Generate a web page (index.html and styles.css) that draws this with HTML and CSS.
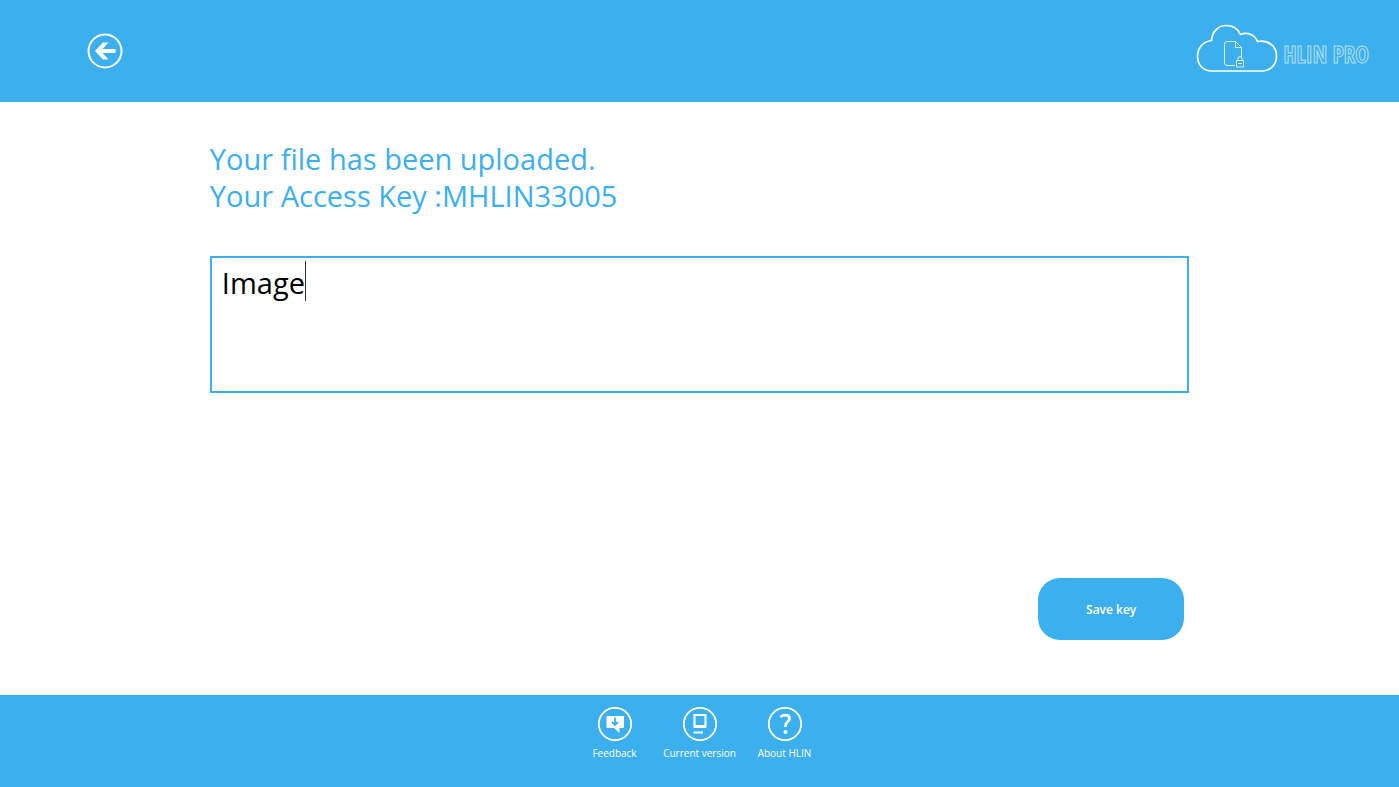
FILE: index.html
```html
<!DOCTYPE html>
<html lang="en">
<head>
    <meta charset="UTF-8">
    <meta name="viewport" content="width=device-width, initial-scale=1.0">
    <title>HLIN PRO</title>
    <link rel="stylesheet" href="styles.css">
</head>
<body>
    <header class="top-bar">
        <button class="back-button" type="button" aria-label="Back">
            <svg width="36" height="36" viewBox="0 0 36 36">
                <circle cx="18" cy="18" r="16.5" fill="none" stroke="#fff" stroke-width="2"/>
                <path d="M8 18L16 9.500H21.500L15.500 16H28.500V20H15.500L21.500 26.500H16Z" fill="#fff"/>
            </svg>
        </button>
        <a class="logo" href="#">
            <svg width="82" height="50" viewBox="0 0 82 50" fill="none" stroke="#fff">
                <path d="M16 47C7 47 1.500 40.500 1.500 32.500C1.500 24 7 17.500 15.500 16.500C16 8 22 1.500 30 1.500C37 1.500 42 5 44.500 10.500C52 7.500 59 11 61.500 17.500C72 15.500 80.500 22 80.500 32C80.500 41 74 47 66 47Z" stroke-width="1.700"/>
                <path d="M39 41.500H31Q28.500 41.500 28.500 39V20Q28.500 17.500 31 17.500H39.500L45.500 23.500V33M39.500 17.500V23.500H45.500" opacity=".8"/>
                <path d="M40.500 36.500H47.500V43H40.500ZM42 36.500V34.500Q42 32.500 44 32.500Q46 32.500 46 34.500V36.500M42 39.500H46" opacity=".8"/>
            </svg>
            <span class="logo-text">HLIN PRO</span>
        </a>
    </header>
    <main>
        <h1>Your file has been uploaded.<br>Your Access Key :MHLIN33005</h1>
        <div class="key-note">
            <textarea id="note" aria-label="Key description" spellcheck="false">Image</textarea>
            <span class="caret"></span>
        </div>
        <button class="save-button" type="button">Save key</button>
    </main>
    <footer>
        <nav>
            <a href="#feedback">
                <svg width="36" height="36" viewBox="0 0 36 36">
                    <circle cx="18" cy="18" r="16.200" fill="none" stroke="#fff" stroke-width="1.800"/>
                    <path d="M10.500 10H26Q27 10 27 11V21Q27 22 26 22H22.500V27L17 22H10.500Q9.500 22 9.500 21V11Q9.500 10 10.500 10Z" fill="#fff"/>
                    <path d="M18 11.500V19M15 16L18 19L21 16" fill="none" stroke="#3cb0ee" stroke-width="1.800"/>
                </svg>
                <span>Feedback</span>
            </a>
            <a href="#version">
                <svg width="36" height="36" viewBox="0 0 36 36">
                    <circle cx="18" cy="18" r="16.200" fill="none" stroke="#fff" stroke-width="1.800"/>
                    <path d="M11.500 8H24.500V22H11.500ZM13.500 10V19H22.500V10Z" fill="#fff" fill-rule="evenodd"/>
                    <path d="M11.500 26.500H21" stroke="#fff" stroke-width="2"/>
                </svg>
                <span>Current version</span>
            </a>
            <a href="#about">
                <svg width="36" height="36" viewBox="0 0 36 36">
                    <circle cx="18" cy="18" r="16.200" fill="none" stroke="#fff" stroke-width="1.800"/>
                    <path d="M13.500 11Q15.500 9.200 18.500 9.200Q22.500 9.200 22.500 12.500Q22.500 14.500 20.200 16.200Q18.500 17.500 18.500 20V21" fill="none" stroke="#fff" stroke-width="2.800"/>
                    <circle cx="18.500" cy="26" r="2" fill="#fff"/>
                </svg>
                <span>About HLIN</span>
            </a>
        </nav>
    </footer>
</body>
</html>
```

FILE: styles.css
```css
* {
    box-sizing: border-box;
}

body {
    margin: 0;
    min-height: 100vh;
    display: flex;
    flex-direction: column;
    background: #fff;
    font-family: "Segoe UI", "Open Sans", sans-serif;
}

button {
    border: none;
    font-family: inherit;
    cursor: pointer;
}

svg {
    display: block;
}

.top-bar {
    display: flex;
    align-items: flex-start;
    justify-content: space-between;
    padding: 24px 30px 28px 87px;
    background: #3cb0ee;
}

.back-button {
    margin-top: 9px;
    padding: 0;
    background: none;
}

.logo {
    display: flex;
    align-items: center;
    gap: 6px;
    text-decoration: none;
}

.logo-text {
    padding-top: 10px;
    font-family: "Liberation Sans Narrow", "Open Sans Condensed", "Liberation Sans", sans-serif;
    font-size: 23px;
    font-weight: bold;
    line-height: 24px;
    color: transparent;
    -webkit-text-stroke: 1px rgba(255, 255, 255, 0.6);
}

main {
    flex: 1;
    display: flex;
    flex-direction: column;
    padding: 38px 15% 55px;
}

h1 {
    margin: 0 0 42px;
    font-size: 29px;
    font-weight: normal;
    line-height: 37px;
    color: #3cb0ee;
}

.key-note {
    position: relative;
}

textarea {
    display: block;
    width: 100%;
    height: 137px;
    padding: 5px 10px;
    border: 2px solid #3cb0ee;
    border-radius: 0;
    outline: none;
    resize: none;
    font-family: inherit;
    font-size: 29px;
    line-height: 40px;
    color: #000;
}

.caret {
    position: absolute;
    top: 5px;
    left: 95px;
    width: 1px;
    height: 40px;
    background: #333;
}

.save-button {
    width: 146px;
    height: 62px;
    margin: auto 5px 0 auto;
    border-radius: 22px;
    background: #3cb0ee;
    color: #fff;
    font-size: 12px;
    font-weight: 600;
}

footer {
    padding: 11px 0 26px;
    background: #3cb0ee;
}

nav {
    display: flex;
    justify-content: center;
}

nav a {
    display: flex;
    flex-direction: column;
    align-items: center;
    gap: 3px;
    width: 85px;
    color: #fff;
    font-size: 10px;
    line-height: 16px;
    text-decoration: none;
}
```
